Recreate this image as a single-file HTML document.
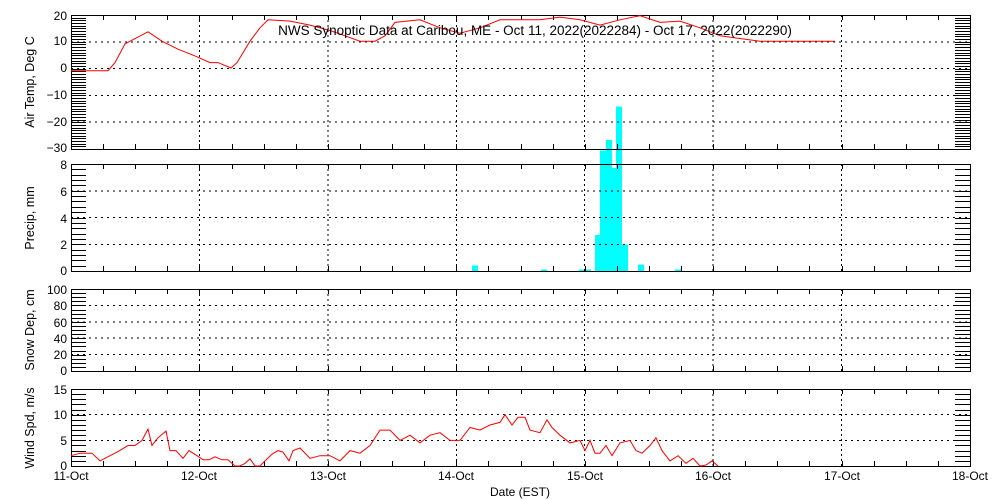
<!DOCTYPE html>
<html><head><meta charset="utf-8"><style>
html,body{margin:0;padding:0;background:#fff;width:1000px;height:500px;overflow:hidden}
svg{display:block}
text{font-family:"Liberation Sans","DejaVu Sans",sans-serif;font-size:12px;fill:#000}
</style></head><body>
<svg id="s" width="1000" height="500" xmlns="http://www.w3.org/2000/svg" shape-rendering="crispEdges">
<g id="g"></g>
<text x="535" y="35" text-anchor="middle" style="font-size:13.5px">NWS Synoptic Data at Caribou, ME - Oct 11, 2022(2022284) - Oct 17, 2022(2022290)</text>
<g text-anchor="end">
<text x="67" y="20">20</text><text x="67" y="45">10</text><text x="67" y="72">0</text><text x="67" y="99">−10</text><text x="67" y="126">−20</text><text x="67" y="152">−30</text>
<text x="67" y="169">8</text><text x="67" y="196">6</text><text x="67" y="223">4</text><text x="67" y="249">2</text><text x="67" y="275">0</text>
<text x="67" y="294">100</text><text x="67" y="310">80</text><text x="67" y="327">60</text><text x="67" y="343">40</text><text x="67" y="359">20</text><text x="67" y="375">0</text>
<text x="67" y="394">15</text><text x="67" y="419">10</text><text x="67" y="445">5</text><text x="67" y="470">0</text>
</g>
<g text-anchor="middle">
<text x="71" y="480">11-Oct</text><text x="199" y="480">12-Oct</text><text x="328" y="480">13-Oct</text><text x="456" y="480">14-Oct</text><text x="585" y="480">15-Oct</text><text x="713" y="480">16-Oct</text><text x="842" y="480">17-Oct</text><text x="970" y="480">18-Oct</text>
<text x="520" y="496">Date (EST)</text>
<text transform="translate(34,82) rotate(-90)" style="font-size:12.5px">Air Temp, Deg C</text>
<text transform="translate(34,218) rotate(-90)" style="font-size:12.5px">Precip, mm</text>
<text transform="translate(34,330) rotate(-90)" style="font-size:12.5px">Snow Dep, cm</text>
<text transform="translate(34,428) rotate(-90)" style="font-size:12.5px">Wind Spd, m/s</text>
</g>
</svg>
<script>
var g=document.getElementById('g'),h='';
function L(x1,y1,x2,y2,st){h+='<line x1="'+x1+'" y1="'+y1+'" x2="'+x2+'" y2="'+y2+'" stroke="#000" stroke-width="1" '+(st||'')+'/>';}
var X0=71,X1=970,DX=(X1-X0)/7;
function X(d){return X0+d*DX;}
function PX(px){return px;}
var P=[{t:15,b:149,min:-30,max:20,tk:1,gr:[-20,-10,0,10]},{t:164,b:271,min:0,max:8,tk:0.4,gr:[2,4,6]},{t:289,b:371,min:0,max:100,tk:5,gr:[20,40,60,80]},{t:389,b:466,min:0,max:15,tk:1,gr:[5,10]}];
var bars=[[472,478,0.4],[541,547,0.1],[579,591,0.1],[595,600,2.7],[600,606,9],[606,612,9.8],[612,616,7.7],[616,622,12.3],[622,628,2],[638,644,0.5],[675,681,0.1]];
var p2=P[1],sc=(p2.b-p2.t)/8;
bars.forEach(function(b){var y=p2.b-b[2]*sc;h+='<rect x="'+b[0]+'" y="'+y.toFixed(1)+'" width="'+(b[1]-b[0])+'" height="'+(p2.b-y).toFixed(1)+'" fill="#00ffff"/>';});
P.forEach(function(p){
 var s=(p.b-p.t)/(p.max-p.min);
 function Y(v){return p.b-(v-p.min)*s;}
 for(var d=1;d<7;d++)L(X(d),p.t,X(d),p.b,'stroke-dasharray="2,3"');
 p.gr.forEach(function(v){L(X0,Y(v),X1,Y(v),'stroke-dasharray="2,4"');});
 for(var v=p.min;v<=p.max+1e-6;v+=p.tk){var y=Math.round(Y(v))+.5;L(X0,y,X0+15,y);L(X1-15,y,X1,y);}
 for(var q=0;q<=28;q++){var x=Math.round(X(q/4))+.5;L(x,p.t,x,p.t+5);L(x,p.b-5,x,p.b);}
 h+='<rect x="'+(X0+.5)+'" y="'+(p.t+.5)+'" width="'+(X1-X0)+'" height="'+(p.b-p.t)+'" fill="none" stroke="#000"/>';
});
var T=[[71,-1],[108,-1],[115,2],[125,9],[148,13.5],[162,10],[178,7],[195,4.5],[210,2],[218,2],[231,0],[237,2],[250,10],[260,15],[268,18],[290,17.5],[310,16],[330,14],[345,12],[360,10],[375,10],[385,12],[395,17],[420,18],[440,15],[460,13],[480,15],[500,18],[540,18],[560,19],[580,18],[600,16],[620,18],[640,19.5],[660,17],[680,17.5],[700,15],[720,12],[740,11],[760,10],[835,10]];
h+='<polyline fill="none" stroke="#f00" shape-rendering="auto" points="'+T.map(function(a){return a[0]+','+(68-a[1]*2.68).toFixed(1)}).join(' ')+'"/>';
var W=[[71,2],[80,2.5],[92,2.5],[100,1],[110,2],[118,2.8],[128,4],[135,4],[142,5],[148,7.2],[152,4],[158,5.5],[166,6.8],[170,3],[176,3],[183,1.5],[189,3],[197,2],[203,1.2],[209,1.2],[215,1.8],[222,1.2],[228,1.2],[235,0],[240,0],[245,0.5],[250,1.4],[255,0],[260,0],[265,1],[272,2.3],[278,3],[283,2.7],[289,1],[293,3],[300,3.5],[310,1.5],[320,2],[330,2],[340,1],[350,3],[360,2.5],[370,4],[380,7],[390,7],[400,5],[410,6],[420,4.5],[430,6],[440,6.5],[450,5],[460,5],[470,7.5],[480,7],[490,8],[500,8.5],[505,10],[512,8],[518,9.5],[525,9.5],[530,7],[540,6.5],[547,9],[552,7.5],[560,6],[570,4.5],[580,5],[585,3],[590,5],[595,2.5],[600,2.5],[606,4],[612,2],[620,4.5],[630,5],[636,3],[642,2.5],[650,4],[656,5.5],[662,3],[670,1],[678,2],[686,0.5],[693,1.5],[700,0],[706,0.2],[712,1],[718,0]];
h+='<polyline fill="none" stroke="#f00" shape-rendering="auto" points="'+W.map(function(a){return a[0]+','+(466-a[1]*5.13).toFixed(1)}).join(' ')+'"/>';
g.innerHTML=h;
</script>
</body></html>
